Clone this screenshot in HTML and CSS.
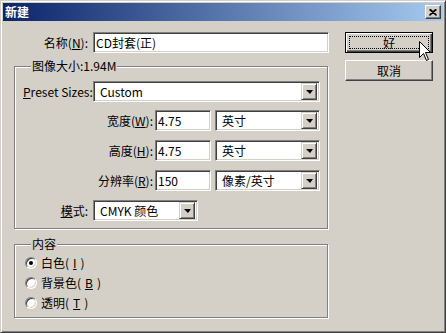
FILE: index.html
```html
<!DOCTYPE html>
<html lang="zh">

<head>
    <meta charset="UTF-8">
    <title>新建</title>
    <link rel="stylesheet" href="styles.css">
</head>

<body>
    <div class="window">
        <div class="titlebar">
            <span class="title">新建</span>
            <span class="close-btn">
                <svg width="8" height="7" viewBox="0 0 8 7">
                    <path d="M0.5 0.5 L7.5 6.5 M1.5 0.5 L7.5 6 M7.5 0.5 L0.5 6.5 M6.5 0.5 L0.5 6" stroke="#000" stroke-width="1.2" fill="none"/>
                </svg>
            </span>
        </div>

        <div class="dialog">
            <div class="main-col">
                <div class="name-row">
                    <label class="name-label">名称(<u>N</u>):</label>
                    <div class="textbox name-box">CD封套(正)</div>
                </div>

                <!-- image size group -->
                <div class="group size-group">
                    <span class="group-title">图像大小:1.94M</span>
                    <div class="preset-row">
                        <label class="preset-label"><u>P</u>reset Sizes:</label>
                        <div class="combo preset-combo"><span class="combo-text">Custom</span><span class="combo-btn"></span></div>
                    </div>
                    <div class="dim-row">
                        <label class="dim-label">宽度(<u>W</u>):</label>
                        <div class="textbox dim-box">4.75</div>
                        <div class="combo unit-combo"><span class="combo-text">英寸</span><span class="combo-btn"></span></div>
                    </div>
                    <div class="dim-row">
                        <label class="dim-label">高度(<u>H</u>):</label>
                        <div class="textbox dim-box">4.75</div>
                        <div class="combo unit-combo"><span class="combo-text">英寸</span><span class="combo-btn"></span></div>
                    </div>
                    <div class="dim-row">
                        <label class="dim-label">分辨率(<u>R</u>):</label>
                        <div class="textbox dim-box">150</div>
                        <div class="combo unit-combo"><span class="combo-text">像素/英寸</span><span class="combo-btn"></span></div>
                    </div>
                    <div class="mode-row">
                        <label class="mode-label"><u>模</u>式:</label>
                        <div class="combo mode-combo"><span class="combo-text">CMYK 颜色</span><span class="combo-btn"></span></div>
                    </div>
                </div>

                <!-- contents group -->
                <div class="group content-group">
                    <span class="group-title">内容</span>
                    <div class="radio-row"><span class="radio checked"></span>白色(<u>I</u>)</div>
                    <div class="radio-row"><span class="radio"></span>背景色(<u>B</u>)</div>
                    <div class="radio-row"><span class="radio"></span>透明(<u>T</u>)</div>
                </div>
            </div>

            <div class="button-col">
                <button class="btn btn-default"><span class="focus-rect">好</span></button>
                <button class="btn">取消</button>
            </div>
        </div>

        <svg class="cursor" width="13" height="20" viewBox="0 0 13 20">
            <path d="M0.5 0.5 V16.5 L4.5 12.5 L7.5 19.5 L9.5 18.5 L6.5 11.5 H11.5 Z" fill="#fff" stroke="#000" stroke-width="1"/>
        </svg>
    </div>
</body>

</html>
```

FILE: styles.css
```css
/* Page */
body {
    margin: 0;
    background: #d4d0c8;
    font-family: "Noto Sans CJK SC", "Liberation Sans", sans-serif;
    font-size: 12px;
    line-height: 1;
    color: #000;
}

/* Window frame */
.window {
    position: relative;
    width: 446px;
    height: 333px;
    box-sizing: border-box;
    padding: 2px;
    background: #d4d0c8;
    border: 1px solid;
    border-color: #d4d0c8 #404040 #404040 #d4d0c8;
    box-shadow: inset 1px 1px 0 #fff, inset -1px -1px 0 #808080;
}

/* Title bar */
.titlebar {
    height: 18px;
    display: flex;
    align-items: center;
    justify-content: space-between;
    padding: 0 2px;
    background: linear-gradient(to right, #0a246a, #a6caf0);
}

.title {
    color: #fff;
    font-weight: bold;
    line-height: 18px;
}

.close-btn {
    width: 16px;
    height: 14px;
    box-sizing: border-box;
    display: flex;
    align-items: center;
    justify-content: center;
    background: #d4d0c8;
    border: 1px solid;
    border-color: #fff #404040 #404040 #fff;
    box-shadow: inset -1px -1px 0 #808080;
}

/* Dialog body */
.dialog {
    display: flex;
    padding: 11px 0 0 11px;
}

.main-col {
    width: 316px;
}

.name-row {
    display: flex;
    align-items: center;
    height: 21px;
}

.name-label {
    width: 79px;
    box-sizing: border-box;
    padding-right: 5px;
    text-align: right;
}

.name-box {
    width: 236px;
}

/* Sunken text box */
.textbox {
    box-sizing: border-box;
    height: 21px;
    padding: 0 2px;
    line-height: 19px;
    background: #fff;
    border: 1px solid;
    border-color: #808080 #fff #fff #808080;
    box-shadow: inset 1px 1px 0 #404040, inset -1px -1px 0 #d4d0c8;
    white-space: nowrap;
}

/* Combo box */
.combo {
    box-sizing: border-box;
    height: 21px;
    display: flex;
    align-items: center;
    justify-content: space-between;
    padding: 2px;
    background: #fff;
    border: 1px solid;
    border-color: #808080 #fff #fff #808080;
    box-shadow: inset 1px 1px 0 #404040, inset -1px -1px 0 #d4d0c8;
}

.combo-text {
    padding-left: 4px;
    line-height: 17px;
    white-space: nowrap;
}

.combo-btn {
    width: 16px;
    height: 17px;
    box-sizing: border-box;
    display: flex;
    align-items: center;
    justify-content: center;
    background: #d4d0c8;
    border: 1px solid;
    border-color: #d4d0c8 #404040 #404040 #d4d0c8;
    box-shadow: inset 1px 1px 0 #fff, inset -1px -1px 0 #808080;
}

.combo-btn::after {
    content: "";
    border-left: 4px solid transparent;
    border-right: 3px solid transparent;
    border-top: 4px solid #000;
    margin-top: 1px;
}

/* Etched group boxes */
.group {
    position: relative;
    box-sizing: border-box;
    width: 314px;
    border: 1px solid #808080;
    box-shadow: inset 1px 1px 0 #fff, 1px 1px 0 #fff;
}

.group-title {
    position: absolute;
    top: -8px;
    left: 16px;
    padding: 0 1px;
    line-height: 14px;
    background: #d4d0c8;
}

.size-group {
    margin-top: 13px;
    height: 163px;
    padding: 14px 7px 0 8px;
}

.preset-row,
.dim-row,
.mode-row {
    display: flex;
    align-items: center;
    height: 21px;
}

.preset-row {
    margin-bottom: 8px;
}

.dim-row {
    margin-bottom: 9px;
}

.preset-label {
    width: 70px;
}

.preset-combo {
    width: 227px;
}

.dim-label {
    width: 132px;
    box-sizing: border-box;
    padding-right: 2px;
    text-align: right;
}

.dim-box {
    width: 56px;
    margin-right: 4px;
}

.unit-combo {
    width: 105px;
}

.mode-label {
    width: 70px;
    box-sizing: border-box;
    padding-right: 5px;
    text-align: right;
}

.mode-combo {
    width: 105px;
}

/* Radio group */
.content-group {
    margin-top: 15px;
    height: 74px;
    padding: 8px 0 0 10px;
}

.radio-row {
    display: flex;
    align-items: center;
    gap: 4px;
    height: 20px;
}

.radio {
    position: relative;
    width: 12px;
    height: 12px;
    box-sizing: border-box;
    border-radius: 50%;
    background: #fff;
    border: 1px solid;
    border-color: #808080 #fff #fff #808080;
    box-shadow: inset 1px 1px 0 #404040, inset -1px -1px 0 #d4d0c8;
}

.radio.checked::after {
    content: "";
    position: absolute;
    left: 3px;
    top: 3px;
    width: 4px;
    height: 4px;
    border-radius: 50%;
    background: #000;
}

/* Buttons */
.button-col {
    margin-left: 15px;
    display: flex;
    flex-direction: column;
    gap: 7px;
}

.btn {
    width: 88px;
    height: 21px;
    box-sizing: border-box;
    padding: 0;
    font: inherit;
    color: #000;
    background: #d4d0c8;
    border: 1px solid;
    border-color: #fff #404040 #404040 #fff;
    box-shadow: inset -1px -1px 0 #808080;
}

.btn-default {
    padding: 3px;
    border-color: #000;
    box-shadow: inset 1px 1px 0 #fff, inset -1px -1px 0 #404040, inset -2px -2px 0 #808080;
}

.focus-rect {
    display: block;
    height: 100%;
    box-sizing: border-box;
    border: 1px dotted #000;
    line-height: 11px;
}

/* Mouse pointer over the OK button */
.cursor {
    position: absolute;
    left: 418px;
    top: 40px;
}
```
